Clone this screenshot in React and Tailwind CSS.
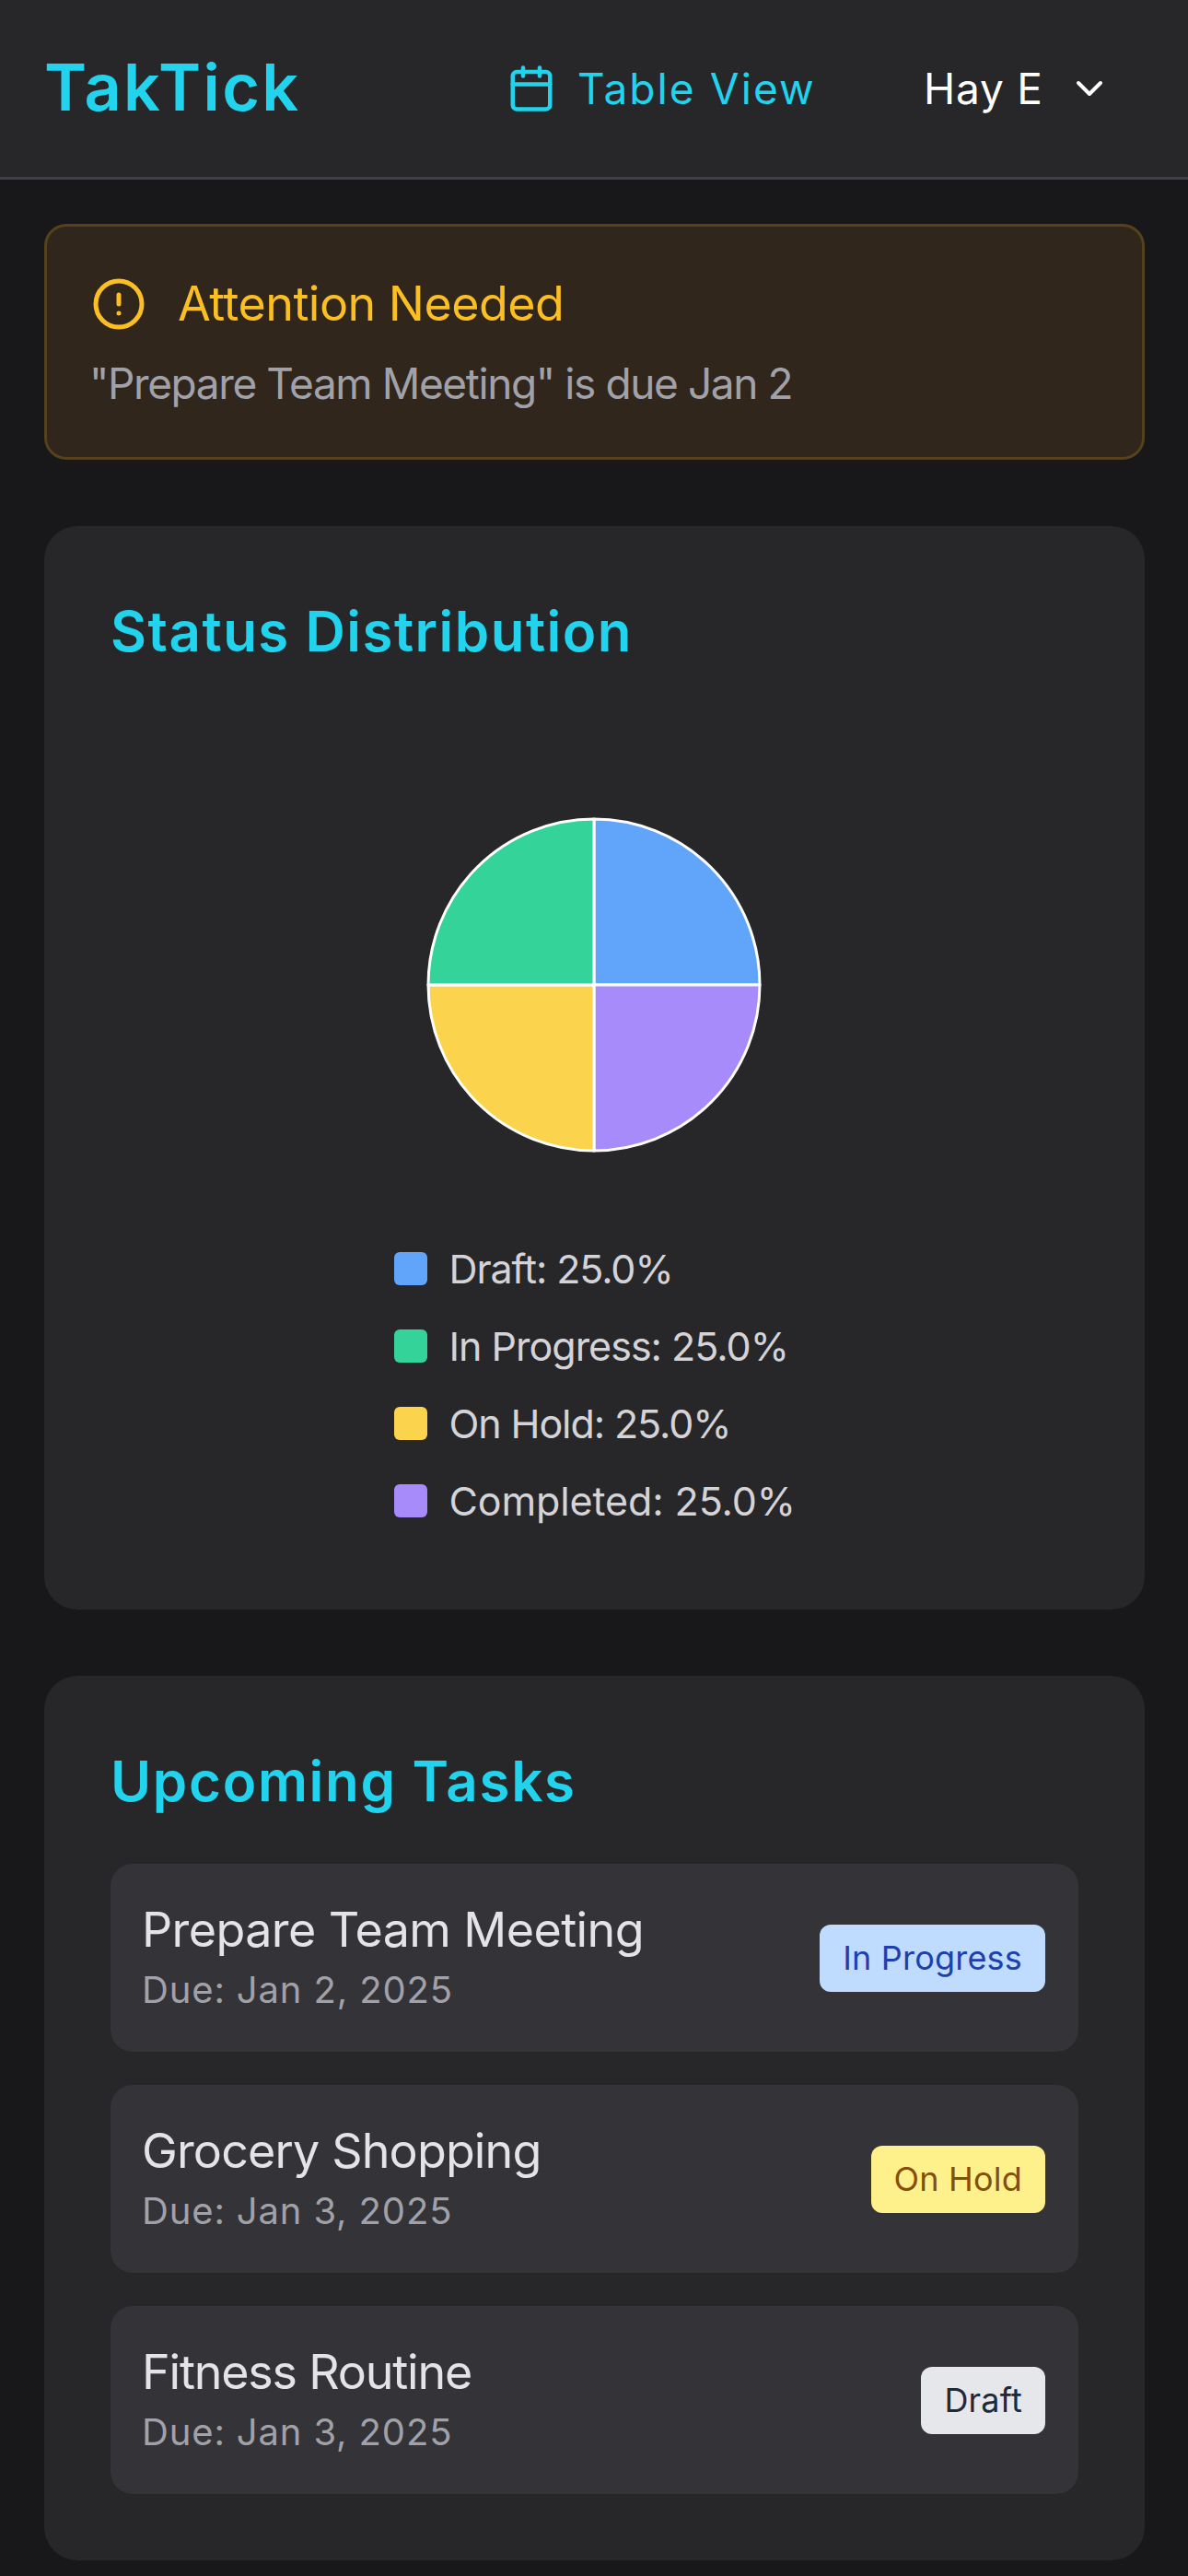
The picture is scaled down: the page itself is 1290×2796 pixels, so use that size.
import React from "react";
import { Calendar, ChevronDown, CircleAlert } from "lucide-react";

const font = { fontFamily: '"Inter", "Noto Sans", sans-serif' };

const legend = [
  ["bg-[#60a5fa]", "Draft: 25.0%", "tracking-[-1.1px]"],
  ["bg-[#34d399]", "In Progress: 25.0%", "tracking-[-1px]"],
  ["bg-[#fcd34d]", "On Hold: 25.0%", "tracking-[-1.1px]"],
  ["bg-[#a78bfa]", "Completed: 25.0%", "tracking-[-0.1px]"],
];

const tasks = [
  ["Prepare Team Meeting", "Due: Jan 2, 2025", "In Progress", "bg-[#bfdbfe] text-[#1e40af]", "tracking-[-0.6px]"],
  ["Grocery Shopping", "Due: Jan 3, 2025", "On Hold", "bg-[#fef08a] text-[#854d0e]", "tracking-[-0.85px]"],
  ["Fitness Routine", "Due: Jan 3, 2025", "Draft", "bg-[#e5e7eb] text-[#1f2937]", "tracking-[-1.2px]"],
];

function Pie() {
  return (
    <svg width="364" height="364" viewBox="-182 -182 364 364" className="block">
      <g stroke="#ffffff" strokeWidth="3" strokeLinejoin="round">
        <path d="M0 0L0 -180A180 180 0 0 1 180 0Z" fill="#60a5fa" />
        <path d="M0 0L180 0A180 180 0 0 1 0 180Z" fill="#a78bfa" />
        <path d="M0 0L0 180A180 180 0 0 1 -180 0Z" fill="#fcd34d" />
        <path d="M0 0L-180 0A180 180 0 0 1 0 -180Z" fill="#34d399" />
      </g>
    </svg>
  );
}

export default function App() {
  return (
    <div style={font} className="h-[2796px] overflow-hidden bg-[#18181b]">
      <header className="h-[195px] bg-[#27272a] border-b-[3px] border-[#3f3f46] pl-[48px] flex items-center">
        <h1 className="w-[502px] pb-[3px] text-[70px] leading-[96px] font-semibold text-[#22d3ee] tracking-[2.3px]">TakTick</h1>
        <div className="flex items-center gap-[23px] text-[#22d3ee]">
          <Calendar size={54} strokeWidth={2} />
          <span className="w-[260px] text-[46px] leading-[72px] tracking-[2.1px]">Table View</span>
        </div>
        <div className="ml-[116px] flex items-center text-white">
          <span className="w-[156px] text-[46px] leading-[72px] tracking-[0.8px]">Hay E</span>
          <ChevronDown size={48} strokeWidth={2} />
        </div>
      </header>
      <main className="pl-[48px] pr-[47px] pt-[48px] flex flex-col gap-[72px]">
        <section className="h-[256px] rounded-[24px] border-[3px] border-[#55411c] bg-[#30261b] pl-[46px] pr-[48px] pt-[42px]">
          <div className="ml-[2px] flex items-center gap-[34px] text-[#fbbf24]">
            <CircleAlert size={60} strokeWidth={2} />
            <span className="text-[52px] leading-[84px] tracking-[-0.55px]">Attention Needed</span>
          </div>
          <p className="mt-[8px] text-[46px] leading-[72px] tracking-[-1.4px] text-[#a1a1aa]">"Prepare Team Meeting" is due Jan 2</p>
        </section>
        <section className="h-[1176px] rounded-[36px] bg-[#27272a] p-[72px]">
          <h2 className="text-[60px] leading-[84px] font-semibold tracking-[1.5px] text-[#22d3ee]">Status Distribution</h2>
          <div className="mt-[160px] pr-[1px] flex justify-center">
            <Pie />
          </div>
          <ul className="mt-[90px] mx-auto w-[436px] flex flex-col gap-[12px]">
            {legend.map(([c, t, k]) => (
              <li key={t} className={"flex items-center gap-[24px] h-[72px] whitespace-nowrap text-[43px] text-[#d4d4d8] " + k}>
                <span className={"w-[36px] h-[36px] shrink-0 rounded-[6px] " + c} />
                {t}
              </li>
            ))}
          </ul>
        </section>
        <section className="rounded-[36px] bg-[#27272a] p-[72px]">
          <h2 className="text-[60px] leading-[84px] font-semibold tracking-[1.7px] text-[#22d3ee]">Upcoming Tasks</h2>
          <div className="mt-[48px] flex flex-col gap-[36px]">
            {tasks.map(([t, d, s, c, k]) => (
              <div key={t} className="h-[204px] rounded-[24px] bg-[#333338] pl-[34px] pr-[36px] flex items-center justify-between">
                <div className="pb-[12px]">
                  <div className={"text-[52px] leading-[81px] text-[#e4e4e7] " + k}>{t}</div>
                  <div className="text-[40px] leading-[49px] tracking-[0.85px] text-[#a1a1aa]">{d}</div>
                </div>
                <span className={"h-[73px] flex items-center px-[25px] rounded-[12px] text-[36px] tracking-[0.2px] " + c}>{s}</span>
              </div>
            ))}
          </div>
        </section>
      </main>
    </div>
  );
}
